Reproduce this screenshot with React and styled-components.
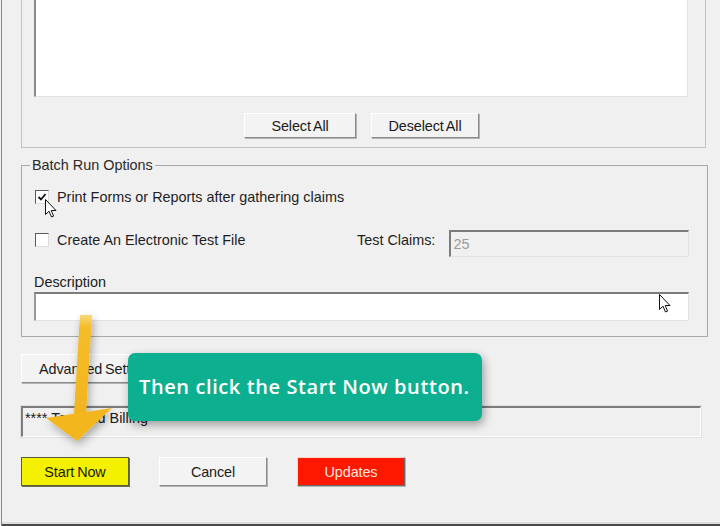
import React from "react";
import styled, { createGlobalStyle } from "styled-components";

const GlobalStyle = createGlobalStyle`
  html, body {
    margin: 0;
    padding: 0;
    background: #f0f0f0;
  }
  body {
    font-family: "Liberation Sans", Arial, sans-serif;
    font-size: 14.4px;
    color: #1a1a1a;
  }
`;

const Window = styled.div`
  position: relative;
  width: 720px;
  height: 526px;
  box-sizing: border-box;
  background: #f0f0f0;
  border-left: 1px solid #8a8a8a;
  margin-left: 1px;
  overflow: hidden;
  &::after {
    content: "";
    position: absolute;
    left: 0;
    right: 0;
    bottom: 0;
    height: 2px;
    background: #4a4a4a;
    box-shadow: 0 -2px 0 #dcdcdc;
  }
`;

const Column = styled.div`
  display: flex;
  flex-direction: column;
  padding-left: 19px;
`;

const UpperGroup = styled.div`
  width: 685px;
  height: 148px;
  box-sizing: border-box;
  border: 1px solid #c2c2c2;
  border-top: none;
  padding: 0 17px 0 12px;
  display: flex;
  flex-direction: column;
`;

const ListBox = styled.div`
  height: 97px;
  box-sizing: border-box;
  background: #fff;
  border-left: 2px solid #8a8a8a;
  border-right: 1px solid #e2e2e2;
  border-bottom: 1px solid #e2e2e2;
`;

const CenterRow = styled.div`
  display: flex;
  justify-content: center;
  gap: 15px;
  margin-top: 16px;
  padding-left: 1px;
`;

const Button = styled.button`
  width: ${(p) => p.w || 108}px;
  height: ${(p) => p.h || 25}px;
  box-sizing: border-box;
  padding: 0;
  font-family: "Liberation Sans", Arial, sans-serif;
  font-size: 14.4px;
  letter-spacing: -0.1px;
  word-spacing: -1px;
  color: ${(p) => (p.tone === "red" ? "#ffe6dc" : "#1a1a1a")};
  background: ${(p) =>
    p.tone === "yellow" ? "#f3f000" : p.tone === "red" ? "#ff1800" : "#f3f3f3"};
  border: 1px solid;
  border-color: ${(p) =>
    p.tone === "yellow"
      ? "#5d5d3c"
      : p.tone === "red"
      ? "#ffd9c8 #6a6a6a #6a6a6a #ffd9c8"
      : "#ffffff #8a8a8a #8a8a8a #ffffff"};
  box-shadow: ${(p) =>
    p.tone === "yellow" ? "1px 1px 0 #6c6c50" : "1px 1px 0 #b4b4b4"};
  text-align: ${(p) => (p.align === "left" ? "left" : "center")};
  padding-left: ${(p) => (p.align === "left" ? "17px" : "0")};
`;

const Fieldset = styled.fieldset`
  margin: 9px 0 0 0;
  width: 687px;
  height: 180px;
  box-sizing: border-box;
  border: 1px solid #a8a8a8;
  padding: 6px 18px 0 12px;
  min-width: 0;
`;

const Legend = styled.legend`
  padding: 0 2px;
  margin-left: -4px;
  font-size: 14.4px;
  line-height: 16px;
  color: #2a2a2a;
`;

const CheckRow = styled.label`
  display: flex;
  align-items: center;
  height: 20px;
  margin-top: ${(p) => p.mt || 0}px;
`;

const Box = styled.span`
  width: 14px;
  height: 14px;
  box-sizing: border-box;
  margin-left: 1px;
  border: 1px solid #5a5a5a;
  border-right-color: #dcdcdc;
  border-bottom-color: #dcdcdc;
  background: #fff;
  display: flex;
  align-items: center;
  justify-content: center;
  flex: none;
`;

const Label = styled.span`
  margin-left: ${(p) => p.ml || 0}px;
  white-space: nowrap;
  line-height: 18px;
  color: #1e1e1e;
`;

const OptionRow = styled.div`
  display: flex;
  align-items: flex-start;
  margin-top: 23px;
  height: 27px;
  & > * {
    margin-top: 1px;
  }
  & > *:last-child {
    margin-top: 0;
  }
`;

const LeftPart = styled.div`
  width: 323px;
  height: 18px;
  display: flex;
  align-items: center;
`;

const Field = styled.div`
  flex: ${(p) => (p.grow ? 1 : "none")};
  height: ${(p) => p.h}px;
  box-sizing: border-box;
  background: ${(p) => (p.disabled ? "#f0f0f0" : "#ffffff")};
  border: 1px solid #e3e3e3;
  border-top: 2px solid #7c7c7c;
  border-left: 2px solid ${(p) => (p.disabled ? "#7c7c7c" : "#9a9a9a")};
  margin-left: ${(p) => p.ml || 0}px;
  display: flex;
  align-items: center;
  padding-left: 2px;
  color: ${(p) => (p.disabled ? "#9c9c9c" : "#1a1a1a")};
`;

const DescLabel = styled.div`
  margin-top: 16px;
  margin-bottom: 1px;
  height: 18px;
  line-height: 18px;
`;

const StatusField = styled.div`
  margin-top: 23px;
  width: 680px;
  height: 31px;
  box-sizing: border-box;
  border: 1px solid #ffffff;
  border-top: 2px solid #7c7c7c;
  border-left: 2px solid #7c7c7c;
  outline: 1px solid #e0e0e0;
  padding: 2px 0 0 2px;
  color: #1a1a1a;
`;

const BottomRow = styled.div`
  display: flex;
  gap: 30px;
  margin-top: 20px;
`;

const Spacer = styled.div`
  margin-top: 17px;
`;

const Callout = styled.div`
  position: absolute;
  left: 126px;
  top: 353px;
  width: 354px;
  height: 68px;
  box-sizing: border-box;
  border-radius: 7px;
  background: #0caf8f;
  box-shadow: 2px 4px 10px rgba(0, 0, 0, 0.35);
  display: flex;
  align-items: center;
  padding-left: 11px;
  padding-bottom: 2px;
  color: #ffffff;
  font-family: "Open Sans", "DejaVu Sans", sans-serif;
  font-size: 20px;
  font-weight: 600;
  letter-spacing: 0.6px;
  white-space: nowrap;
`;

const Overlay = styled.svg`
  position: absolute;
  left: ${(p) => p.x}px;
  top: ${(p) => p.y}px;
  overflow: visible;
  pointer-events: none;
`;

function Cursor({ x, y }) {
  return (
    <Overlay x={x} y={y} width="12" height="20" viewBox="0 0 12 20">
      <path
        d="M0.5 0.5 L0.5 15.5 L4 12.2 L6.5 18 L8.6 17.1 L6.2 11.5 L11 11.5 Z"
        fill="#ffffff"
        stroke="#111"
        strokeWidth="1"
        strokeLinejoin="round"
      />
    </Overlay>
  );
}

function Arrow() {
  return (
    <Overlay x={38} y={310} width="80" height="140" viewBox="0 0 80 140">
      <defs>
        <filter id="sh" x="-30%" y="-30%" width="160%" height="160%">
          <feDropShadow dx="2" dy="4" stdDeviation="4" floodColor="#000" floodOpacity="0.3" />
        </filter>
        <linearGradient id="shaft" x1="0" y1="0" x2="0" y2="1">
          <stop offset="0" stopColor="#f8d77a" />
          <stop offset="0.12" stopColor="#f5bd2a" />
          <stop offset="1" stopColor="#f2b41e" />
        </linearGradient>
      </defs>
      <g filter="url(#sh)">
        <path d="M40 5 L52 5 L46 104 L34 104 Z" fill="url(#shaft)" />
        <path d="M6 108 L72 98 L37 131 Z" fill="#f3b61f" />
      </g>
    </Overlay>
  );
}

export default function App() {
  return (
    <>
      <GlobalStyle />
      <Window>
        <Column>
          <UpperGroup>
            <ListBox />
            <CenterRow>
              <Button w={112} h={25}>Select All</Button>
              <Button w={108} h={25}>Deselect All</Button>
            </CenterRow>
          </UpperGroup>

          <Fieldset>
            <Legend>Batch Run Options</Legend>
            <CheckRow mt={8}>
              <Box>
                <svg width="10" height="10" viewBox="0 0 10 10">
                  <path d="M1.5 5 L4 7.5 L8.5 2" fill="none" stroke="#111" strokeWidth="1.8" />
                </svg>
              </Box>
              <Label ml={8}>Print Forms or Reports after gathering claims</Label>
            </CheckRow>
            <OptionRow>
              <LeftPart>
                <Box />
                <Label ml={8}>Create An Electronic Test File</Label>
              </LeftPart>
              <Label>Test Claims:</Label>
              <Field disabled grow h={27} ml={14}>25</Field>
            </OptionRow>
            <DescLabel>Description</DescLabel>
            <Field grow h={29} />
          </Fieldset>

          <Spacer>
            <Button w={178} h={29} align="left">Advanced Settings</Button>
          </Spacer>

          <StatusField>**** Test and Billing</StatusField>

          <BottomRow>
            <Button tone="yellow" w={108} h={29}>Start Now</Button>
            <Button w={108} h={29}>Cancel</Button>
            <Button tone="red" w={108} h={29}>Updates</Button>
          </BottomRow>
        </Column>

        <Arrow />
        <Callout>Then click the Start Now button.</Callout>
        <Cursor x={43} y={199} />
        <Cursor x={657} y={294} />
      </Window>
    </>
  );
}
